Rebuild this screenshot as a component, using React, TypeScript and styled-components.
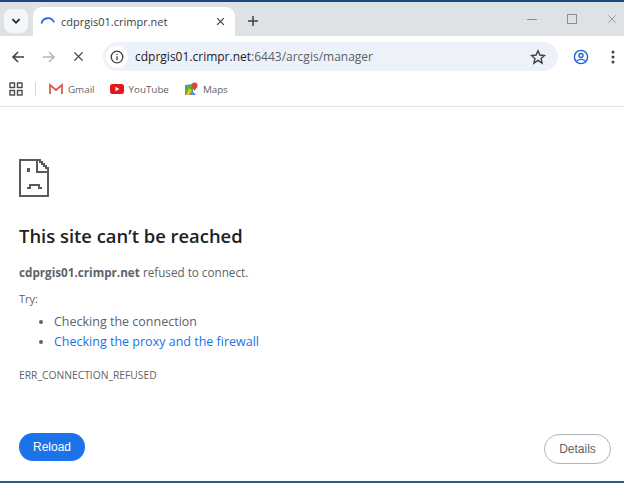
import { FC } from "react";
import styled, { createGlobalStyle } from "styled-components";

const GlobalStyle = createGlobalStyle`
  html, body { margin: 0; padding: 0; background: #fff; }
  body { font-family: "Open Sans", "Noto Sans", "Liberation Sans", sans-serif; }
`;

const Window = styled.div`
  width: 624px;
  height: 483px;
  display: flex;
  flex-direction: column;
  overflow: hidden;
  border-top: 2px solid #17497f;
  border-bottom: 2px solid #2d5a80;
  box-sizing: border-box;
  background: #fff;
`;

const TabStrip = styled.div`
  height: 34px;
  flex: none;
  background: #dee1e6;
  display: flex;
  align-items: flex-end;
  padding-left: 4px;
  box-sizing: border-box;
`;

const TabSearch = styled.div`
  width: 24px;
  height: 24px;
  margin: 0 5px 3px 0;
  border-radius: 8px;
  background: #f5f6f8;
  display: flex;
  align-items: center;
  justify-content: center;
`;

const Tab = styled.div`
  width: 202px;
  height: 29px;
  background: #fff;
  border-radius: 9px 9px 0 0;
  display: flex;
  align-items: center;
  padding: 0 10px 0 7px;
  box-sizing: border-box;
`;

const TabTitle = styled.span`
  flex: 1;
  margin-left: 5px;
  font-size: 11px;
  color: #3c4043;
  white-space: nowrap;
`;

const NewTab = styled.div`
  width: 16px;
  height: 16px;
  margin: 0 0 7px 10px;
  display: flex;
`;

const WindowControls = styled.div`
  margin-left: auto;
  display: flex;
  align-items: center;
  height: 100%;
  padding: 0 7px 0 0;
  gap: 30px;
  box-sizing: border-box;
`;

const Toolbar = styled.div`
  height: 36px;
  flex: none;
  display: flex;
  align-items: center;
  padding-left: 11px;
  padding-right: 5px;
  box-sizing: border-box;
`;

const NavIcons = styled.div`
  display: flex;
  align-items: center;
  gap: 17px;
  width: 92px;
  flex: none;
  margin-top: 5px;
`;

const UrlBar = styled.div`
  width: 455px;
  height: 29px;
  flex: none;
  border-radius: 15px;
  background: #edf2fa;
  display: flex;
  align-items: center;
  padding: 0 12px 0 3px;
  box-sizing: border-box;
  margin-top: 5px;
`;

const InfoBadge = styled.div`
  width: 22px;
  height: 22px;
  border-radius: 50%;
  background: #fff;
  display: flex;
  align-items: center;
  justify-content: center;
  flex: none;
`;

const UrlText = styled.span`
  flex: 1;
  margin-left: 7px;
  font-size: 12px;
  color: #5b5e62;
  white-space: nowrap;
`;

const UrlHost = styled.span`
  color: #202124;
`;

const ToolbarEnd = styled.div`
  display: flex;
  align-items: center;
  gap: 22px;
  margin-left: 15px;
  margin-top: 5px;
`;

const BookmarkBar = styled.div`
  height: 34px;
  flex: none;
  display: flex;
  align-items: center;
  padding-left: 9px;
  border-bottom: 1px solid #e3e3e3;
  box-sizing: content-box;
`;

const Divider = styled.div`
  width: 1px;
  height: 14px;
  background: #c9d7ea;
  margin: 0 13px 0 12px;
`;

const Bookmark = styled.div`
  display: flex;
  align-items: center;
  gap: 5px;
  margin-right: 15px;
  font-size: 9.8px;
  color: #5f6368;
`;

const Page = styled.main`
  flex: 1;
  display: flex;
  flex-direction: column;
  padding: 52px 13px 0 19px;
  color: #5f6368;
`;

const Heading = styled.h1`
  margin: 26px 0 0;
  font-size: 18.4px;
  line-height: 26px;
  font-weight: 600;
  color: #202124;
`;

const Message = styled.p`
  margin: 15px 0 0;
  font-size: 11.7px;
  line-height: 16px;
  strong { font-weight: 700; }
`;

const Try = styled.p`
  margin: 11px 0 0;
  font-size: 11px;
  line-height: 16px;
`;

const Suggestions = styled.ul`
  margin: 5px 0 0;
  padding: 0 0 0 35px;
  font-size: 12.5px;
  line-height: 20px;
`;

const LinkItem = styled.li`
  color: #1a73e8;
  &::marker { color: #5f6368; }
`;

const ErrorCode = styled.div`
  margin-top: 16px;
  font-size: 10.3px;
  line-height: 14px;
`;

const Actions = styled.div`
  margin-top: auto;
  margin-bottom: 19px;
  display: flex;
  justify-content: space-between;
  align-items: flex-end;
`;

const ReloadButton = styled.button`
  width: 66px;
  height: 28px;
  border: none;
  border-radius: 14px;
  background: #1a73e8;
  color: #fff;
  font: 12px "Liberation Sans", sans-serif;
  margin-bottom: 1px;
`;

const DetailsButton = styled.button`
  width: 67px;
  height: 30px;
  border: 1px solid #b0b3b8;
  border-radius: 15px;
  background: #fff;
  color: #5f6368;
  font: 12px "Liberation Sans", sans-serif;
  margin-bottom: -2px;
`;

const Chevron: FC = () => (
  <svg width="12" height="12" viewBox="0 0 12 12" fill="none" stroke="#202124" strokeWidth="1.8">
    <path d="M2.5 4.2 6 7.8l3.5-3.6" />
  </svg>
);

const Close: FC<{ size: number; color: string; width?: number }> = ({ size, color, width = 1.4 }) => (
  <svg width={size} height={size} viewBox="0 0 12 12" fill="none" stroke={color} strokeWidth={width}>
    <path d="M1.5 1.5l9 9M10.5 1.5l-9 9" />
  </svg>
);

const ErrorPageIcon: FC = () => (
  <svg width="30" height="38" viewBox="0 0 30 38" fill="none" stroke="#5a5a5a" strokeWidth="2" shapeRendering="crispEdges">
    <path d="M18 1H1v36h28V9h-2V7h-2V5h-2V3h-2V1h-3v12h11" />
    <path d="M9.500 9v4" strokeWidth="3" />
    <path d="M8 29h3v-3h9v3h3" />
  </svg>
);

export default function App() {
  return (
    <>
      <GlobalStyle />
      <Window>
        <TabStrip>
          <TabSearch>
            <Chevron />
          </TabSearch>
          <Tab>
            <svg width="16" height="16" viewBox="0 0 16 16" fill="none" stroke="#1a73e8" strokeWidth="1.8">
              <path d="M1.5 9.500A6.500 6.500 0 0 1 14 8.500" />
            </svg>
            <TabTitle>cdprgis01.crimpr.net</TabTitle>
            <Close size={9} color="#3c4043" width={1.6} />
          </Tab>
          <NewTab>
            <svg width="12" height="12" viewBox="0 0 12 12" fill="none" stroke="#3c4043" strokeWidth="1.5" style={{ margin: "2px" }}>
              <path d="M6 1v10M1 6h10" />
            </svg>
          </NewTab>
          <WindowControls>
            <svg width="10" height="10" viewBox="0 0 10 10" stroke="#8c8f93" fill="none"><path d="M0 5.500h10" /></svg>
            <svg width="10" height="10" viewBox="0 0 10 10" stroke="#8c8f93" fill="none"><rect x=".5" y=".5" width="9" height="9" /></svg>
            <Close size={10} color="#8c8f93" width={1} />
          </WindowControls>
        </TabStrip>
        <Toolbar>
          <NavIcons>
            <svg width="14" height="14" viewBox="0 0 14 14" fill="none" stroke="#3c4043" strokeWidth="1.5">
              <path d="M13 7H2M7 2 2 7l5 5" />
            </svg>
            <svg width="14" height="14" viewBox="0 0 14 14" fill="none" stroke="#b4b6b9" strokeWidth="1.5">
              <path d="M1 7h11M7 2l5 5-5 5" />
            </svg>
            <Close size={11} color="#3c4043" width={1.5} />
          </NavIcons>
          <UrlBar>
            <InfoBadge>
              <svg width="14" height="14" viewBox="0 0 14 14" fill="none" stroke="#3c4043" strokeWidth="1.3">
                <circle cx="7" cy="7" r="5.800" />
                <path d="M7 6.200v4M7 3.800v1.300" />
              </svg>
            </InfoBadge>
            <UrlText>
              <UrlHost>cdprgis01.crimpr.net</UrlHost>:6443/arcgis/manager
            </UrlText>
            <svg width="16" height="16" viewBox="0 0 16 16" fill="none" stroke="#3c4043" strokeWidth="1.4">
              <path d="M8 1.800l1.900 4.200 4.600.5-3.400 3.100 1 4.500L8 11.300l-4.100 2.800 1-4.500L1.500 6.500l4.600-.5z" />
            </svg>
          </UrlBar>
          <ToolbarEnd>
            <svg width="16" height="16" viewBox="0 0 16 16" fill="none" stroke="#1a62d2" strokeWidth="1.4">
              <circle cx="8" cy="8" r="6.600" />
              <circle cx="8" cy="6.500" r="2" />
              <path d="M3.800 12c2-2.200 6.400-2.200 8.400 0" />
            </svg>
            <svg width="4" height="14" viewBox="0 0 4 14" fill="#3c4043">
              <circle cx="2" cy="2" r="1.500" />
              <circle cx="2" cy="7" r="1.500" />
              <circle cx="2" cy="12" r="1.500" />
            </svg>
          </ToolbarEnd>
        </Toolbar>
        <BookmarkBar>
          <svg width="14" height="14" viewBox="0 0 14 14" fill="none" stroke="#45494d" strokeWidth="1.4">
            <rect x="1" y="1" width="4.500" height="4.500" />
            <rect x="8.500" y="1" width="4.500" height="4.500" />
            <rect x="1" y="8.500" width="4.500" height="4.500" />
            <rect x="8.500" y="8.500" width="4.500" height="4.500" />
          </svg>
          <Divider />
          <Bookmark>
            <svg width="14" height="12" viewBox="0 0 14 12" fill="none">
              <path d="M1 11V2l6 5 6-5v9" stroke="#dd5a50" strokeWidth="1.800" />
            </svg>
            Gmail
          </Bookmark>
          <Bookmark>
            <svg width="14" height="10" viewBox="0 0 14 10">
              <rect width="14" height="10" rx="2.500" fill="#e8161c" />
              <path d="M5.500 2.800v4.400L9.300 5z" fill="#fff" />
            </svg>
            YouTube
          </Bookmark>
          <Bookmark>
            <svg width="14" height="14" viewBox="0 0 14 14">
              <path d="M1 3l8-1v11H1z" fill="#4caf50" />
              <path d="M1 13l6-6 5 6z" fill="#4f8fe8" />
              <path d="M2 13l3-7 3 3-3 4z" fill="#f4c20d" />
              <circle cx="10.500" cy="3.500" r="3" fill="#d9483b" />
              <path d="M8 5l2.500 4L13 5z" fill="#d9483b" />
            </svg>
            Maps
          </Bookmark>
        </BookmarkBar>
        <Page>
          <ErrorPageIcon />
          <Heading>This site can’t be reached</Heading>
          <Message>
            <strong>cdprgis01.crimpr.net</strong> refused to connect.
          </Message>
          <Try>Try:</Try>
          <Suggestions>
            <li>Checking the connection</li>
            <LinkItem>Checking the proxy and the firewall</LinkItem>
          </Suggestions>
          <ErrorCode>ERR_CONNECTION_REFUSED</ErrorCode>
          <Actions>
            <ReloadButton>Reload</ReloadButton>
            <DetailsButton>Details</DetailsButton>
          </Actions>
        </Page>
      </Window>
    </>
  );
}
